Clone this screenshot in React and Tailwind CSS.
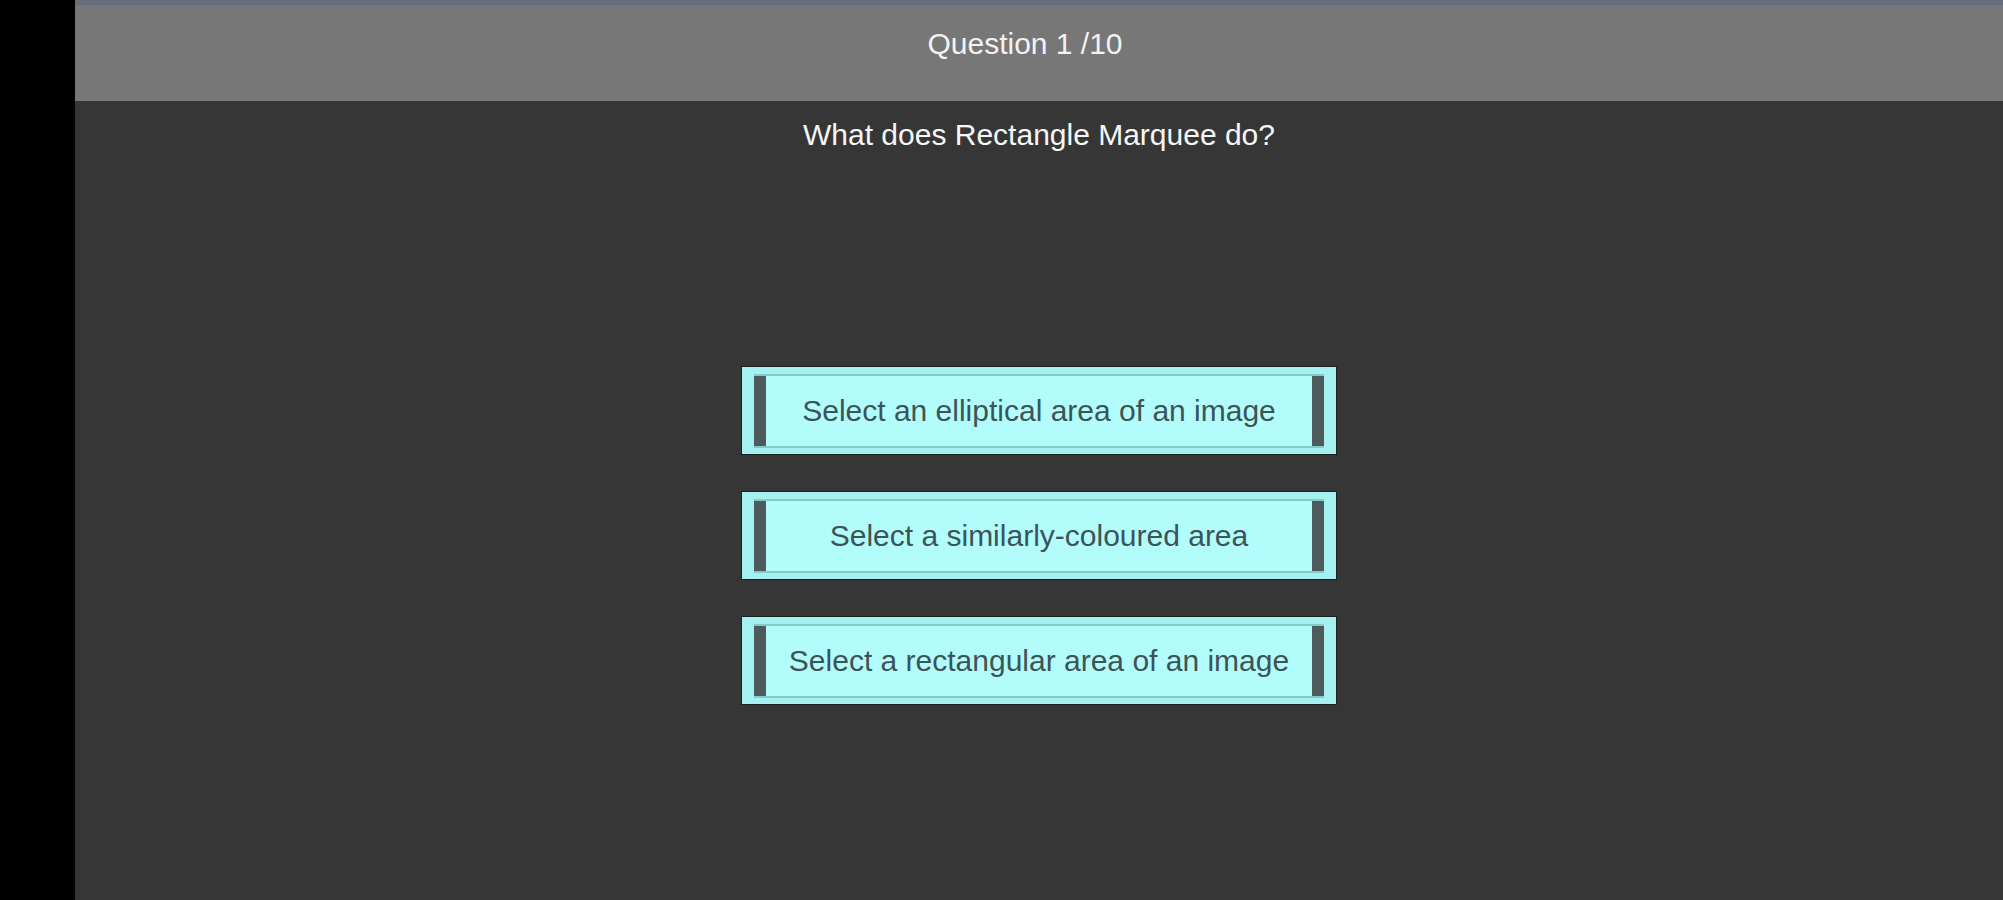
import React from "react";

const answers = [
  "Select an elliptical area of an image",
  "Select a similarly-coloured area",
  "Select a rectangular area of an image",
];

function AnswerButton({ label }) {
  return (
    <button className="w-[594px] h-[87px] bg-[#a5f1f0] pt-[7px] pb-[6px] px-[12px] shadow-[0_0_0_1px_#1c2222] flex">
      <div className="flex-1 flex border-y-[2px] border-y-[#80cccb]">
        <div className="w-[12px] bg-[#4d5b5d]" />
        <div className="flex-1 flex items-center justify-center bg-[#b2fdfc]">
          <span className="text-[30px] leading-[34px] text-[#3c5457]" style={{ fontFamily: '"Liberation Sans", Arial, sans-serif' }}>
            {label}
          </span>
        </div>
        <div className="w-[12px] bg-[#4d5b5d]" />
      </div>
    </button>
  );
}

export default function App() {
  return (
    <div className="w-[2003px] h-[900px] flex overflow-hidden" style={{ fontFamily: '"Liberation Sans", Arial, sans-serif' }}>
      <div className="w-[75px] h-full bg-black shrink-0" />
      <div className="flex-1 h-full bg-[#363636] flex flex-col items-center">
        <div className="w-full h-[101px] shrink-0 bg-[#777777] border-t-[5px] border-t-[#646e7a] pt-[22px] pr-[28px] text-center">
          <span className="text-[30px] leading-[34px] text-[#f2f2f2]">Question 1 /10</span>
        </div>
        <div className="mt-[17px] text-[30px] leading-[34px] text-[#f7f7f7]">What does Rectangle Marquee do?</div>
        <div className="mt-[215px] flex flex-col gap-[38px]">
          {answers.map((a) => (
            <AnswerButton key={a} label={a} />
          ))}
        </div>
      </div>
    </div>
  );
}
